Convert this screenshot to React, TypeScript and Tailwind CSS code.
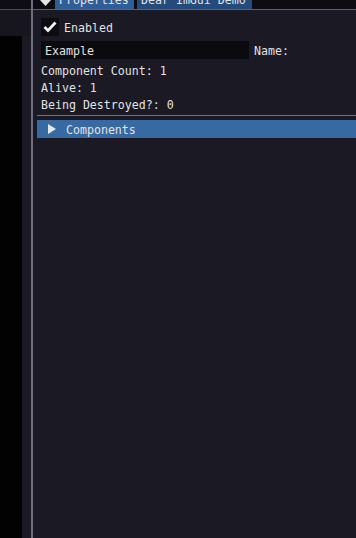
import React from "react";

const mono = { fontFamily: '"DejaVu Sans Mono", "Liberation Mono", monospace' };

export default function App() {
  return (
    <div
      className="w-[356px] h-[538px] flex bg-[#1a1924] overflow-hidden text-[#e2e2e2] text-[11.6px] leading-[13px]"
      style={mono}
    >
      {/* left docked panel */}
      <div className="w-[31px] h-full flex flex-col shrink-0">
        <div className="h-[9px] bg-[#0e0d16]" />
        <div className="h-px bg-[#3b4d6e]" />
        <div className="h-[26px] bg-[#17161f]" />
        <div className="flex-1 flex">
          <div className="w-[22px] bg-[#020203]" />
          <div className="flex-1 bg-[#1a1924]" />
        </div>
      </div>
      <div className="w-[2px] h-full bg-[#6e6e80] shrink-0" />

      {/* right panel */}
      <div className="flex-1 flex flex-col min-w-0">
        {/* tab bar */}
        <div className="h-[9px] bg-[#0c0c12] flex items-start overflow-hidden">
          <div className="w-[22px] h-[9px] flex justify-center items-start pl-[2px]">
            <svg width="11" height="9" viewBox="0 0 11 9">
              <polygon points="0,0 11,0 5.5,6" fill="#e6e6e6" />
            </svg>
          </div>
          <div className="w-[79px] h-[9px] bg-[#2f5d97] flex items-start pl-[4px] overflow-hidden">
            <span className="mt-[-6px] whitespace-nowrap">Properties</span>
          </div>
          <div className="w-[3px]" />
          <div className="w-[115px] h-[9px] bg-[#254a7c] flex items-start pl-[4px] overflow-hidden">
            <span className="mt-[-6px] whitespace-nowrap">Dear ImGui Demo</span>
          </div>
        </div>
        <div className="h-px bg-[#3a6aa5]" />

        {/* content */}
        <div className="flex flex-col pt-[8px]">
          <div className="flex items-center pl-[8px] h-[18px]">
            <div className="w-[18px] h-[18px] bg-[#0c0c12] flex items-center justify-center">
              <svg width="14" height="12" viewBox="0 0 14 12">
                <polyline
                  points="1.5,6 5,9.5 12.5,1.5"
                  fill="none"
                  stroke="#f0f0f0"
                  strokeWidth="2.8"
                  strokeLinejoin="miter"
                />
              </svg>
            </div>
            <span className="ml-[5px] translate-y-[1px]">Enabled</span>
          </div>

          <div className="flex items-center pl-[8px] mt-[5px] h-[18px]">
            <div className="w-[208px] h-[18px] bg-[#0b0b0f] flex items-center pl-[4px]">
              <span className="translate-y-[1px]">Example</span>
            </div>
            <span className="ml-[5px] translate-y-[1px]">Name:</span>
          </div>

          <div className="pl-[8px] mt-[6px] flex flex-col gap-[4px]">
            <div className="h-[13px]">Component Count: 1</div>
            <div className="h-[13px]">Alive: 1</div>
            <div className="h-[13px]">Being Destroyed?: 0</div>
          </div>

          <div className="ml-[4px] mt-[3px] h-px bg-[#6e6e80]" />

          <div className="ml-[4px] mt-[4px] h-[18px] bg-[#376aa3] flex items-center">
            <svg width="9" height="10" viewBox="0 0 9 10" className="ml-[11px]">
              <polygon points="0,0 8,5 0,10" fill="#e6e6e6" />
            </svg>
            <span className="ml-[9px] translate-y-[1px]">Components</span>
          </div>
        </div>
      </div>
    </div>
  );
}
